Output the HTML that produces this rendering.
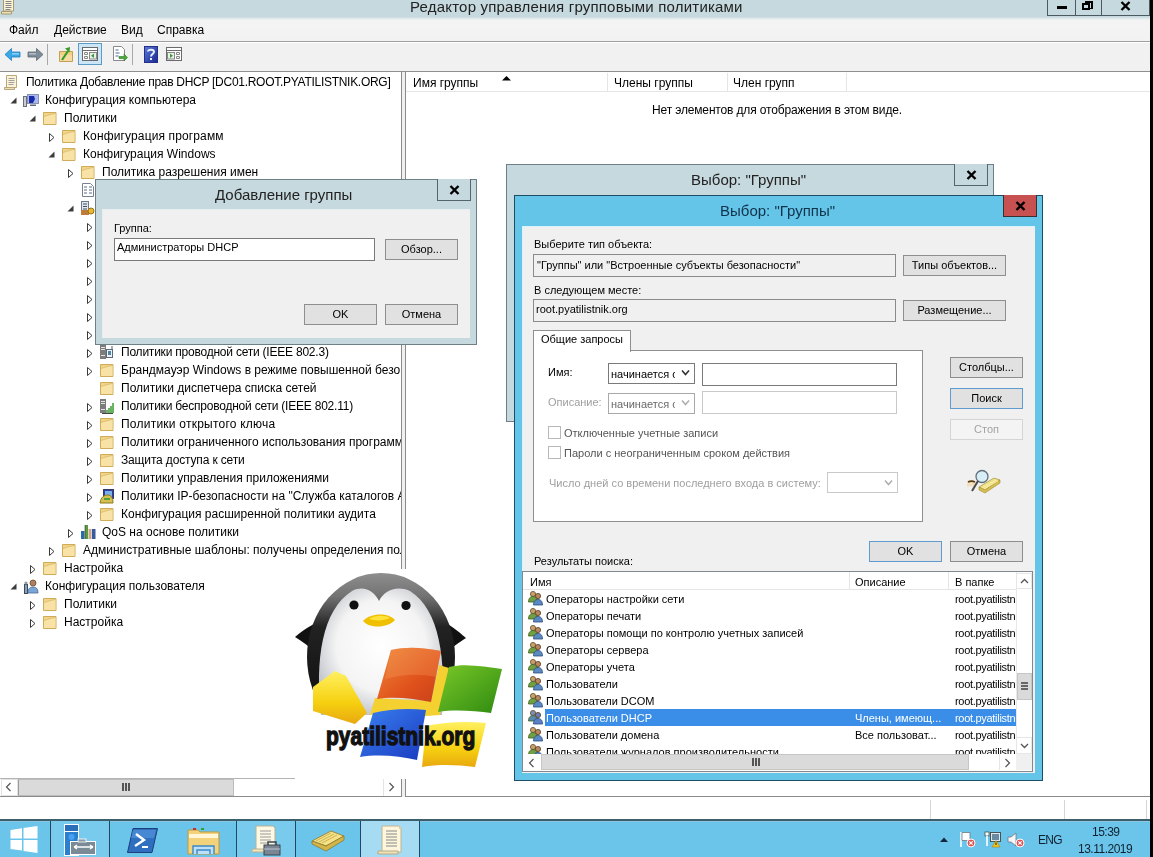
<!DOCTYPE html>
<html><head><meta charset="utf-8">
<style>
*{margin:0;padding:0;box-sizing:border-box}
html,body{width:1153px;height:857px;overflow:hidden;background:#fff;font-family:"Liberation Sans",sans-serif;color:#000}
.t,.row span,.btn{will-change:transform}
.a{position:absolute}
.t{position:absolute;white-space:nowrap;line-height:1}
#title{left:0;top:0;width:1150px;height:18px;background:#c6d9de}
#menu{left:0;top:17px;width:1150px;height:25px;background:linear-gradient(#c9d9de 0px,#e8eef0 2px,#f4f4f4 4px,#f2f2f2 100%);border-bottom:1px solid #a0a0a0}
#tool{left:0;top:42px;width:1150px;height:30px;background:#f1f1f1;border-top:1px solid #fff;border-bottom:1px solid #8f8f8f}
.m{font-size:12px;top:24px}
.row{position:absolute;height:18px;font-size:12px;white-space:nowrap}
.row svg{position:absolute}
.row span{position:absolute;top:3px;line-height:1}
.fold{position:absolute;width:14px;height:12px;background:#f3dc95;border:1px solid #d6b866;border-radius:1px}
.fold:before{content:"";position:absolute;left:7px;top:-3px;width:5px;height:3px;background:#f3dc95;border:1px solid #d6b866;border-bottom:none}
.exp{position:absolute;width:0;height:0;border-top:4px solid transparent;border-bottom:4px solid transparent;border-left:5px solid #555}
.exp:after{content:"";position:absolute;left:-4px;top:-2px;border-top:2px solid transparent;border-bottom:2px solid transparent;border-left:2.5px solid #fff}
.col{position:absolute;width:0;height:0;border-left:5px solid transparent;border-bottom:5px solid #444}
.btn{position:absolute;background:#e1e1e1;border:1px solid #8e8e8e;font-size:11px;text-align:center;line-height:18px}
.tb{position:absolute;background:#fff;border:1px solid #7a7a7a}
.dlg{font-size:11px}
</style></head><body>
<!-- main window -->
<div id="title" class="a"></div>
<div class="t" style="left:410px;top:-1px;font-size:15px;color:#222;letter-spacing:0.2px">Редактор управления групповыми политиками</div>
<div id="menu" class="a"></div>
<div class="t m" style="left:9px">Файл</div>
<div class="t m" style="left:54px">Действие</div>
<div class="t m" style="left:121px">Вид</div>
<div class="t m" style="left:157px">Справка</div>
<div id="tool" class="a"></div>

<!-- panes -->
<div class="a" style="left:0;top:72px;width:402px;height:725px;border-right:1px solid #8a8a8a;border-bottom:1px solid #8a8a8a;background:#fff"></div>
<div class="a" style="left:402px;top:72px;width:3px;height:725px;background:#f0f0f0"></div>
<div class="a" style="left:405px;top:72px;width:745px;height:725px;border-left:1px solid #8a8a8a;border-bottom:1px solid #8a8a8a;background:#fff"></div>

<div class="a" style="left:0;top:72px;width:401px;height:706px;overflow:hidden">
<div class="row" style="top:1px"><svg class="ic" style="left:3px;top:1px" width="16" height="16" viewBox="0 0 16 16"><path d="M3.5 1.5h10v12h-10z" fill="#fbf3d8" stroke="#b8a77a"/><path d="M1.5 13.5h10v2h-10z" fill="#ece0b8" stroke="#b8a77a"/><path d="M5.5 4.5h6M5.5 6.5h6M5.5 8.5h6M5.5 10.5h5" stroke="#8a8a8a" stroke-width="0.8"/></svg><span style="left:25.6px;letter-spacing:-0.28px">Политика Добавление прав DHCP [DC01.ROOT.PYATILISTNIK.ORG]</span></div>
<div class="row" style="top:19px"><svg class="ex" style="left:10px;top:4px" width="7" height="10" viewBox="0 0 7 10"><path d="M6.5 2.5v6h-6z" fill="#3c3c3c"/></svg><svg class="ic" style="left:23px;top:1px" width="18" height="16" viewBox="0 0 18 16"><rect x="0.5" y="4.5" width="3" height="10" fill="#c8ccd4" stroke="#6a6e78"/><rect x="4.5" y="2.5" width="11" height="9" fill="#a8b8f0" stroke="#8890b0"/><path d="M6 4h5l1 3-2 4H6z" fill="#1a2aa8"/><rect x="7" y="12.5" width="6" height="1.5" fill="#606878"/></svg><span style="left:44.6px">Конфигурация компьютера</span></div>
<div class="row" style="top:37px"><svg class="ex" style="left:29px;top:4px" width="7" height="10" viewBox="0 0 7 10"><path d="M6.5 2.5v6h-6z" fill="#3c3c3c"/></svg><svg class="ic" style="left:42px;top:1px" width="16" height="16" viewBox="0 0 16 16"><path d="M1.5 2.5h12.5v12h-12.5z" fill="#f2d488" stroke="#cfac58"/><path d="M2 6.5C5 5.5 9 4 13.5 3.5v10.5H2z" fill="#f8e2a6"/><path d="M2 6.5C5 5.5 9 4 13.5 3.5" fill="none" stroke="#d8b868" stroke-width="0.8"/></svg><span style="left:63.6px">Политики</span></div>
<div class="row" style="top:55px"><svg class="ex" style="left:47.5px;top:5px" width="8" height="11" viewBox="0 0 8 11"><path d="M1.5 1.5L6 5.5 1.5 9.5z" fill="#fff" stroke="#3a3a3a"/></svg><svg class="ic" style="left:61px;top:1px" width="16" height="16" viewBox="0 0 16 16"><path d="M1.5 2.5h12.5v12h-12.5z" fill="#f2d488" stroke="#cfac58"/><path d="M2 6.5C5 5.5 9 4 13.5 3.5v10.5H2z" fill="#f8e2a6"/><path d="M2 6.5C5 5.5 9 4 13.5 3.5" fill="none" stroke="#d8b868" stroke-width="0.8"/></svg><span style="left:82.6px;letter-spacing:0.13px">Конфигурация программ</span></div>
<div class="row" style="top:73px"><svg class="ex" style="left:48px;top:4px" width="7" height="10" viewBox="0 0 7 10"><path d="M6.5 2.5v6h-6z" fill="#3c3c3c"/></svg><svg class="ic" style="left:61px;top:1px" width="16" height="16" viewBox="0 0 16 16"><path d="M1.5 2.5h12.5v12h-12.5z" fill="#f2d488" stroke="#cfac58"/><path d="M2 6.5C5 5.5 9 4 13.5 3.5v10.5H2z" fill="#f8e2a6"/><path d="M2 6.5C5 5.5 9 4 13.5 3.5" fill="none" stroke="#d8b868" stroke-width="0.8"/></svg><span style="left:82.6px">Конфигурация Windows</span></div>
<div class="row" style="top:91px"><svg class="ex" style="left:66.5px;top:5px" width="8" height="11" viewBox="0 0 8 11"><path d="M1.5 1.5L6 5.5 1.5 9.5z" fill="#fff" stroke="#3a3a3a"/></svg><svg class="ic" style="left:80px;top:1px" width="16" height="16" viewBox="0 0 16 16"><path d="M1.5 2.5h12.5v12h-12.5z" fill="#f2d488" stroke="#cfac58"/><path d="M2 6.5C5 5.5 9 4 13.5 3.5v10.5H2z" fill="#f8e2a6"/><path d="M2 6.5C5 5.5 9 4 13.5 3.5" fill="none" stroke="#d8b868" stroke-width="0.8"/></svg><span style="left:101.6px">Политика разрешения имен</span></div>
<div class="row" style="top:109px"><svg class="ic" style="left:80px;top:1px" width="16" height="16" viewBox="0 0 16 16"><path d="M2.5 1.5h8l3 3v10h-11z" fill="#fff" stroke="#7a8090"/><path d="M4 5h3M9 5h3M4 8h3M9 8h3M4 11h3M9 11h3" stroke="#5a6a8a"/></svg><span style="left:101.6px">Сценарии (запуск/завершение)</span></div>
<div class="row" style="top:127px"><svg class="ex" style="left:67px;top:4px" width="7" height="10" viewBox="0 0 7 10"><path d="M6.5 2.5v6h-6z" fill="#3c3c3c"/></svg><svg class="ic" style="left:80px;top:1px" width="16" height="16" viewBox="0 0 16 16"><rect x="1.5" y="1.5" width="7" height="13" fill="#dfe6ee" stroke="#6a7a8a"/><path d="M3 4h4M3 6.5h4M3 9h4" stroke="#44505c"/><rect x="1" y="10" width="8" height="5" fill="#c07a3a"/><circle cx="11" cy="11" r="3" fill="#e8b830" stroke="#9a7010"/></svg><span style="left:101.6px">Параметры безопасности</span></div>
<div class="row" style="top:145px"><svg class="ex" style="left:85.5px;top:5px" width="8" height="11" viewBox="0 0 8 11"><path d="M1.5 1.5L6 5.5 1.5 9.5z" fill="#fff" stroke="#3a3a3a"/></svg><svg class="ic" style="left:99px;top:1px" width="16" height="16" viewBox="0 0 16 16"><path d="M1.5 2.5h12.5v12h-12.5z" fill="#f2d488" stroke="#cfac58"/><path d="M2 6.5C5 5.5 9 4 13.5 3.5v10.5H2z" fill="#f8e2a6"/><path d="M2 6.5C5 5.5 9 4 13.5 3.5" fill="none" stroke="#d8b868" stroke-width="0.8"/></svg><span style="left:120.6px">Политики учетных записей</span></div>
<div class="row" style="top:163px"><svg class="ex" style="left:85.5px;top:5px" width="8" height="11" viewBox="0 0 8 11"><path d="M1.5 1.5L6 5.5 1.5 9.5z" fill="#fff" stroke="#3a3a3a"/></svg><svg class="ic" style="left:99px;top:1px" width="16" height="16" viewBox="0 0 16 16"><path d="M1.5 2.5h12.5v12h-12.5z" fill="#f2d488" stroke="#cfac58"/><path d="M2 6.5C5 5.5 9 4 13.5 3.5v10.5H2z" fill="#f8e2a6"/><path d="M2 6.5C5 5.5 9 4 13.5 3.5" fill="none" stroke="#d8b868" stroke-width="0.8"/></svg><span style="left:120.6px">Локальные политики</span></div>
<div class="row" style="top:181px"><svg class="ex" style="left:85.5px;top:5px" width="8" height="11" viewBox="0 0 8 11"><path d="M1.5 1.5L6 5.5 1.5 9.5z" fill="#fff" stroke="#3a3a3a"/></svg><svg class="ic" style="left:99px;top:1px" width="16" height="16" viewBox="0 0 16 16"><path d="M1.5 2.5h12.5v12h-12.5z" fill="#f2d488" stroke="#cfac58"/><path d="M2 6.5C5 5.5 9 4 13.5 3.5v10.5H2z" fill="#f8e2a6"/><path d="M2 6.5C5 5.5 9 4 13.5 3.5" fill="none" stroke="#d8b868" stroke-width="0.8"/></svg><span style="left:120.6px">Журнал событий</span></div>
<div class="row" style="top:199px"><svg class="ex" style="left:85.5px;top:5px" width="8" height="11" viewBox="0 0 8 11"><path d="M1.5 1.5L6 5.5 1.5 9.5z" fill="#fff" stroke="#3a3a3a"/></svg><svg class="ic" style="left:99px;top:1px" width="16" height="16" viewBox="0 0 16 16"><path d="M1.5 2.5h12.5v12h-12.5z" fill="#f2d488" stroke="#cfac58"/><path d="M2 6.5C5 5.5 9 4 13.5 3.5v10.5H2z" fill="#f8e2a6"/><path d="M2 6.5C5 5.5 9 4 13.5 3.5" fill="none" stroke="#d8b868" stroke-width="0.8"/></svg><span style="left:120.6px">Группы с ограниченным доступом</span></div>
<div class="row" style="top:217px"><svg class="ex" style="left:85.5px;top:5px" width="8" height="11" viewBox="0 0 8 11"><path d="M1.5 1.5L6 5.5 1.5 9.5z" fill="#fff" stroke="#3a3a3a"/></svg><svg class="ic" style="left:99px;top:1px" width="16" height="16" viewBox="0 0 16 16"><path d="M1.5 2.5h12.5v12h-12.5z" fill="#f2d488" stroke="#cfac58"/><path d="M2 6.5C5 5.5 9 4 13.5 3.5v10.5H2z" fill="#f8e2a6"/><path d="M2 6.5C5 5.5 9 4 13.5 3.5" fill="none" stroke="#d8b868" stroke-width="0.8"/></svg><span style="left:120.6px">Системные службы</span></div>
<div class="row" style="top:235px"><svg class="ex" style="left:85.5px;top:5px" width="8" height="11" viewBox="0 0 8 11"><path d="M1.5 1.5L6 5.5 1.5 9.5z" fill="#fff" stroke="#3a3a3a"/></svg><svg class="ic" style="left:99px;top:1px" width="16" height="16" viewBox="0 0 16 16"><path d="M1.5 2.5h12.5v12h-12.5z" fill="#f2d488" stroke="#cfac58"/><path d="M2 6.5C5 5.5 9 4 13.5 3.5v10.5H2z" fill="#f8e2a6"/><path d="M2 6.5C5 5.5 9 4 13.5 3.5" fill="none" stroke="#d8b868" stroke-width="0.8"/></svg><span style="left:120.6px">Реестр</span></div>
<div class="row" style="top:253px"><svg class="ex" style="left:85.5px;top:5px" width="8" height="11" viewBox="0 0 8 11"><path d="M1.5 1.5L6 5.5 1.5 9.5z" fill="#fff" stroke="#3a3a3a"/></svg><svg class="ic" style="left:99px;top:1px" width="16" height="16" viewBox="0 0 16 16"><path d="M1.5 2.5h12.5v12h-12.5z" fill="#f2d488" stroke="#cfac58"/><path d="M2 6.5C5 5.5 9 4 13.5 3.5v10.5H2z" fill="#f8e2a6"/><path d="M2 6.5C5 5.5 9 4 13.5 3.5" fill="none" stroke="#d8b868" stroke-width="0.8"/></svg><span style="left:120.6px">Файловая система</span></div>
<div class="row" style="top:271px"><svg class="ex" style="left:85.5px;top:5px" width="8" height="11" viewBox="0 0 8 11"><path d="M1.5 1.5L6 5.5 1.5 9.5z" fill="#fff" stroke="#3a3a3a"/></svg><svg class="ic" style="left:99px;top:1px" width="16" height="16" viewBox="0 0 16 16"><rect x="1" y="1" width="6" height="14" fill="#7c7c7c"/><path d="M2 3.5h4M2 5.5h4M2 11.5h4" stroke="#eee" stroke-width="0.9"/><rect x="7.5" y="5.5" width="6" height="8" fill="#eef2f6" stroke="#5a6a7a"/><rect x="9" y="7" width="3" height="4" fill="#4a88a8"/><path d="M13 5V2" stroke="#888" stroke-width="1.4"/></svg><span style="left:120.6px;letter-spacing:-0.22px">Политики проводной сети (IEEE 802.3)</span></div>
<div class="row" style="top:289px"><svg class="ex" style="left:85.5px;top:5px" width="8" height="11" viewBox="0 0 8 11"><path d="M1.5 1.5L6 5.5 1.5 9.5z" fill="#fff" stroke="#3a3a3a"/></svg><svg class="ic" style="left:99px;top:1px" width="16" height="16" viewBox="0 0 16 16"><path d="M1.5 2.5h12.5v12h-12.5z" fill="#f2d488" stroke="#cfac58"/><path d="M2 6.5C5 5.5 9 4 13.5 3.5v10.5H2z" fill="#f8e2a6"/><path d="M2 6.5C5 5.5 9 4 13.5 3.5" fill="none" stroke="#d8b868" stroke-width="0.8"/></svg><span style="left:120.6px">Брандмауэр Windows в режиме повышенной безопасности</span></div>
<div class="row" style="top:307px"><svg class="ic" style="left:99px;top:1px" width="16" height="16" viewBox="0 0 16 16"><path d="M1.5 2.5h12.5v12h-12.5z" fill="#f2d488" stroke="#cfac58"/><path d="M2 6.5C5 5.5 9 4 13.5 3.5v10.5H2z" fill="#f8e2a6"/><path d="M2 6.5C5 5.5 9 4 13.5 3.5" fill="none" stroke="#d8b868" stroke-width="0.8"/></svg><span style="left:120.6px">Политики диспетчера списка сетей</span></div>
<div class="row" style="top:325px"><svg class="ex" style="left:85.5px;top:5px" width="8" height="11" viewBox="0 0 8 11"><path d="M1.5 1.5L6 5.5 1.5 9.5z" fill="#fff" stroke="#3a3a3a"/></svg><svg class="ic" style="left:99px;top:1px" width="16" height="16" viewBox="0 0 16 16"><rect x="1" y="1" width="6" height="14" fill="#7c7c7c"/><path d="M2 3.5h4M2 5.5h4M2 11.5h4" stroke="#eee" stroke-width="0.9"/><path d="M8 15v-3M10 15v-5M12 15v-7M14 15v-10" stroke="#3a9a30" stroke-width="1.5"/><path d="M3 15.5h11" stroke="#444"/></svg><span style="left:120.6px;letter-spacing:-0.22px">Политики беспроводной сети (IEEE 802.11)</span></div>
<div class="row" style="top:343px"><svg class="ex" style="left:85.5px;top:5px" width="8" height="11" viewBox="0 0 8 11"><path d="M1.5 1.5L6 5.5 1.5 9.5z" fill="#fff" stroke="#3a3a3a"/></svg><svg class="ic" style="left:99px;top:1px" width="16" height="16" viewBox="0 0 16 16"><path d="M1.5 2.5h12.5v12h-12.5z" fill="#f2d488" stroke="#cfac58"/><path d="M2 6.5C5 5.5 9 4 13.5 3.5v10.5H2z" fill="#f8e2a6"/><path d="M2 6.5C5 5.5 9 4 13.5 3.5" fill="none" stroke="#d8b868" stroke-width="0.8"/></svg><span style="left:120.6px;letter-spacing:0.23px">Политики открытого ключа</span></div>
<div class="row" style="top:361px"><svg class="ex" style="left:85.5px;top:5px" width="8" height="11" viewBox="0 0 8 11"><path d="M1.5 1.5L6 5.5 1.5 9.5z" fill="#fff" stroke="#3a3a3a"/></svg><svg class="ic" style="left:99px;top:1px" width="16" height="16" viewBox="0 0 16 16"><path d="M1.5 2.5h12.5v12h-12.5z" fill="#f2d488" stroke="#cfac58"/><path d="M2 6.5C5 5.5 9 4 13.5 3.5v10.5H2z" fill="#f8e2a6"/><path d="M2 6.5C5 5.5 9 4 13.5 3.5" fill="none" stroke="#d8b868" stroke-width="0.8"/></svg><span style="left:120.6px">Политики ограниченного использования программ</span></div>
<div class="row" style="top:379px"><svg class="ex" style="left:85.5px;top:5px" width="8" height="11" viewBox="0 0 8 11"><path d="M1.5 1.5L6 5.5 1.5 9.5z" fill="#fff" stroke="#3a3a3a"/></svg><svg class="ic" style="left:99px;top:1px" width="16" height="16" viewBox="0 0 16 16"><path d="M1.5 2.5h12.5v12h-12.5z" fill="#f2d488" stroke="#cfac58"/><path d="M2 6.5C5 5.5 9 4 13.5 3.5v10.5H2z" fill="#f8e2a6"/><path d="M2 6.5C5 5.5 9 4 13.5 3.5" fill="none" stroke="#d8b868" stroke-width="0.8"/></svg><span style="left:120.6px;letter-spacing:-0.15px">Защита доступа к сети</span></div>
<div class="row" style="top:397px"><svg class="ex" style="left:85.5px;top:5px" width="8" height="11" viewBox="0 0 8 11"><path d="M1.5 1.5L6 5.5 1.5 9.5z" fill="#fff" stroke="#3a3a3a"/></svg><svg class="ic" style="left:99px;top:1px" width="16" height="16" viewBox="0 0 16 16"><path d="M1.5 2.5h12.5v12h-12.5z" fill="#f2d488" stroke="#cfac58"/><path d="M2 6.5C5 5.5 9 4 13.5 3.5v10.5H2z" fill="#f8e2a6"/><path d="M2 6.5C5 5.5 9 4 13.5 3.5" fill="none" stroke="#d8b868" stroke-width="0.8"/></svg><span style="left:120.6px">Политики управления приложениями</span></div>
<div class="row" style="top:415px"><svg class="ex" style="left:85.5px;top:5px" width="8" height="11" viewBox="0 0 8 11"><path d="M1.5 1.5L6 5.5 1.5 9.5z" fill="#fff" stroke="#3a3a3a"/></svg><svg class="ic" style="left:99px;top:1px" width="16" height="16" viewBox="0 0 16 16"><rect x="4.5" y="1.5" width="10" height="9" fill="#2840a8" stroke="#3a3a60"/><rect x="6" y="3" width="7" height="6" fill="#7ab0e8"/><path d="M1 15c1-6 4-8 8-8 3 0 5 3 5 8z" fill="#d8c050" stroke="#8a7a20"/><path d="M5 11h6" stroke="#50a040" stroke-width="2"/></svg><span style="left:120.6px">Политики IP-безопасности на &quot;Служба каталогов Active Directory&quot;</span></div>
<div class="row" style="top:433px"><svg class="ex" style="left:85.5px;top:5px" width="8" height="11" viewBox="0 0 8 11"><path d="M1.5 1.5L6 5.5 1.5 9.5z" fill="#fff" stroke="#3a3a3a"/></svg><svg class="ic" style="left:99px;top:1px" width="16" height="16" viewBox="0 0 16 16"><path d="M1.5 2.5h12.5v12h-12.5z" fill="#f2d488" stroke="#cfac58"/><path d="M2 6.5C5 5.5 9 4 13.5 3.5v10.5H2z" fill="#f8e2a6"/><path d="M2 6.5C5 5.5 9 4 13.5 3.5" fill="none" stroke="#d8b868" stroke-width="0.8"/></svg><span style="left:120.6px">Конфигурация расширенной политики аудита</span></div>
<div class="row" style="top:451px"><svg class="ex" style="left:66.5px;top:5px" width="8" height="11" viewBox="0 0 8 11"><path d="M1.5 1.5L6 5.5 1.5 9.5z" fill="#fff" stroke="#3a3a3a"/></svg><svg class="ic" style="left:80px;top:1px" width="18" height="16" viewBox="0 0 18 16"><rect x="1" y="7" width="3.5" height="8" fill="#2a6aa8"/><rect x="5" y="1" width="3" height="14" fill="#5a9a40"/><rect x="8.5" y="5" width="3" height="10" fill="#c8a888"/><rect x="12" y="5" width="3.5" height="10" fill="#3a5aa0"/><path d="M5 1v14" stroke="#333" stroke-width="0.6"/></svg><span style="left:101.6px">QoS на основе политики</span></div>
<div class="row" style="top:469px"><svg class="ex" style="left:47.5px;top:5px" width="8" height="11" viewBox="0 0 8 11"><path d="M1.5 1.5L6 5.5 1.5 9.5z" fill="#fff" stroke="#3a3a3a"/></svg><svg class="ic" style="left:61px;top:1px" width="16" height="16" viewBox="0 0 16 16"><path d="M1.5 2.5h12.5v12h-12.5z" fill="#f2d488" stroke="#cfac58"/><path d="M2 6.5C5 5.5 9 4 13.5 3.5v10.5H2z" fill="#f8e2a6"/><path d="M2 6.5C5 5.5 9 4 13.5 3.5" fill="none" stroke="#d8b868" stroke-width="0.8"/></svg><span style="left:82.6px">Административные шаблоны: получены определения политик</span></div>
<div class="row" style="top:487px"><svg class="ex" style="left:28.5px;top:5px" width="8" height="11" viewBox="0 0 8 11"><path d="M1.5 1.5L6 5.5 1.5 9.5z" fill="#fff" stroke="#3a3a3a"/></svg><svg class="ic" style="left:42px;top:1px" width="16" height="16" viewBox="0 0 16 16"><path d="M1.5 2.5h12.5v12h-12.5z" fill="#f2d488" stroke="#cfac58"/><path d="M2 6.5C5 5.5 9 4 13.5 3.5v10.5H2z" fill="#f8e2a6"/><path d="M2 6.5C5 5.5 9 4 13.5 3.5" fill="none" stroke="#d8b868" stroke-width="0.8"/></svg><span style="left:63.6px">Настройка</span></div>
<div class="row" style="top:505px"><svg class="ex" style="left:10px;top:4px" width="7" height="10" viewBox="0 0 7 10"><path d="M6.5 2.5v6h-6z" fill="#3c3c3c"/></svg><svg class="ic" style="left:23px;top:1px" width="18" height="16" viewBox="0 0 18 16"><rect x="1.5" y="6.5" width="3" height="9" fill="#8aa0b8" stroke="#3a4a5a"/><circle cx="3" cy="5" r="1.6" fill="#999"/><circle cx="10" cy="5" r="3" fill="#b08060" stroke="#6a4a30" stroke-width="0.8"/><path d="M5 15c0-5 2.5-6 5-6s5 1 5 6z" fill="#7aa6d6" stroke="#4a6a98" stroke-width="0.8"/></svg><span style="left:44.6px">Конфигурация пользователя</span></div>
<div class="row" style="top:523px"><svg class="ex" style="left:28.5px;top:5px" width="8" height="11" viewBox="0 0 8 11"><path d="M1.5 1.5L6 5.5 1.5 9.5z" fill="#fff" stroke="#3a3a3a"/></svg><svg class="ic" style="left:42px;top:1px" width="16" height="16" viewBox="0 0 16 16"><path d="M1.5 2.5h12.5v12h-12.5z" fill="#f2d488" stroke="#cfac58"/><path d="M2 6.5C5 5.5 9 4 13.5 3.5v10.5H2z" fill="#f8e2a6"/><path d="M2 6.5C5 5.5 9 4 13.5 3.5" fill="none" stroke="#d8b868" stroke-width="0.8"/></svg><span style="left:63.6px">Политики</span></div>
<div class="row" style="top:541px"><svg class="ex" style="left:28.5px;top:5px" width="8" height="11" viewBox="0 0 8 11"><path d="M1.5 1.5L6 5.5 1.5 9.5z" fill="#fff" stroke="#3a3a3a"/></svg><svg class="ic" style="left:42px;top:1px" width="16" height="16" viewBox="0 0 16 16"><path d="M1.5 2.5h12.5v12h-12.5z" fill="#f2d488" stroke="#cfac58"/><path d="M2 6.5C5 5.5 9 4 13.5 3.5v10.5H2z" fill="#f8e2a6"/><path d="M2 6.5C5 5.5 9 4 13.5 3.5" fill="none" stroke="#d8b868" stroke-width="0.8"/></svg><span style="left:63.6px">Настройка</span></div>
</div>
<!-- status bar -->
<div class="a" style="left:0;top:797px;width:1150px;height:23px;background:#fff"></div>
<!-- title app icon (cropped) -->
<svg class="a" style="left:0;top:0" width="16" height="16" viewBox="0 0 16 16"><path d="M3.5 -2h10v13h-10z" fill="#fbf3d8" stroke="#a89a70"/><path d="M1.5 11.5h10v2.5h-10z" fill="#ece0b8" stroke="#a89a70"/><path d="M5.5 1.5h6M5.5 3.5h6M5.5 5.5h6M5.5 7.5h6M5.5 9.5h5" stroke="#7a7a7a" stroke-width="0.9"/></svg>
<!-- window buttons -->
<div class="a" style="left:1047px;top:-1px;width:103px;height:17px;border:1px solid #4a5a60;border-top:none;background:#c6d9de"></div>
<div class="a" style="left:1075px;top:0;width:1px;height:16px;background:#4a5a60"></div>
<div class="a" style="left:1101px;top:0;width:1px;height:16px;background:#4a5a60"></div>
<div class="a" style="left:1057px;top:6px;width:10px;height:3px;background:#000"></div>
<div class="a" style="left:1085px;top:1px;width:8px;height:8px;border:2px solid #000;border-left-width:1px;border-bottom-width:1px"></div>
<div class="a" style="left:1082px;top:3px;width:8px;height:7px;border:2px solid #000;background:#c6d9de"></div>
<svg class="a" style="left:1120px;top:1px" width="11" height="10" viewBox="0 0 11 10"><path d="M1.5 1l8 8M9.5 1l-8 8" stroke="#000" stroke-width="2.4"/></svg>

<!-- toolbar -->
<svg class="a" style="left:4px;top:47px" width="17" height="15" viewBox="0 0 17 15"><path d="M1 7.5L7.5 1.5V5H16V10H7.5V13.5Z" fill="#3aa7e6" stroke="#1f7dc0" stroke-width="0.8"/><path d="M8 6h7v1.5H8z" fill="#8dd0f5"/></svg>
<svg class="a" style="left:27px;top:47px" width="17" height="15" viewBox="0 0 17 15"><path d="M16 7.5L9.5 1.5V5H1V10H9.5V13.5Z" fill="#7f8c99" stroke="#5c6772" stroke-width="0.8"/><path d="M2 6h7v1.5H2z" fill="#b4bec8"/></svg>
<div class="a" style="left:47px;top:44px;width:1px;height:21px;background:#a8a8a8"></div>
<svg class="a" style="left:58px;top:46px" width="16" height="17" viewBox="0 0 16 17"><path d="M1.5 5.5h13v10h-13z" fill="#f1d088" stroke="#c4a055"/><path d="M2 9h12v6H2z" fill="#f6dca0"/><path d="M4 14L10 5" stroke="#3a9a2a" stroke-width="2.2" fill="none"/><path d="M7 2.5l5-1.5-0.5 5.5z" fill="#3a9a2a"/></svg>
<div class="a" style="left:78px;top:43px;width:24px;height:22px;background:#cde6f7;border:1px solid #5c9ac8"></div>
<svg class="a" style="left:82px;top:47px" width="16" height="14" viewBox="0 0 16 14"><rect x="0.5" y="0.5" width="15" height="13" fill="#fff" stroke="#6a6a6a"/><path d="M0.5 3.5h15" stroke="#6a6a6a"/><path d="M2.5 5.5h3v2h-3zM2.5 9.5h3v2h-3z" fill="none" stroke="#888"/><rect x="7.5" y="5.5" width="7" height="6.5" fill="#e8f0e8" stroke="#888"/><path d="M12 6.5v4.5l-3-2.25z" fill="#3a9a3a"/></svg>
<svg class="a" style="left:112px;top:46px" width="16" height="16" viewBox="0 0 16 16"><path d="M1.5 0.5h8l3 3v11h-11z" fill="#fff" stroke="#8a8a8a"/><path d="M3.5 4h3M3.5 7h4M3.5 10h3" stroke="#4a6a9a"/><path d="M7 10.5h5V8l3.5 3.5L12 15v-2.5H7z" fill="#4aaa3a" stroke="#2e7a22" stroke-width="0.6"/></svg>
<div class="a" style="left:132px;top:44px;width:1px;height:21px;background:#a8a8a8"></div>
<svg class="a" style="left:144px;top:46px" width="14" height="17" viewBox="0 0 14 17"><defs><linearGradient id="hg" x1="0" y1="0" x2="1" y2="1"><stop offset="0" stop-color="#5a78d8"/><stop offset="1" stop-color="#1a2a90"/></linearGradient></defs><rect x="0" y="0" width="14" height="17" fill="#22308a"/><rect x="1" y="1" width="12" height="15" fill="url(#hg)"/><path d="M4 5.5C4 3 10 3 10 5.8 10 8 7 8 7 10.5" fill="none" stroke="#e8eeff" stroke-width="2"/><rect x="6" y="12" width="2" height="2" fill="#e8eeff"/></svg>
<svg class="a" style="left:166px;top:47px" width="16" height="14" viewBox="0 0 16 14"><rect x="0.5" y="0.5" width="15" height="13" fill="#fff" stroke="#6a6a6a"/><path d="M0.5 3.5h15" stroke="#6a6a6a"/><path d="M10.5 5.5h3v2h-3zM10.5 9.5h3v2h-3z" fill="none" stroke="#888"/><rect x="1.5" y="5.5" width="7" height="6.5" fill="#e8f0e8" stroke="#888"/><path d="M4 6.5v4.5l3-2.25z" fill="#3a9a3a"/></svg>

<!-- right pane header -->
<div class="a" style="left:406px;top:72px;width:744px;height:20px;background:#fff;border-bottom:1px solid #e5e5e5"></div>
<div class="a" style="left:607px;top:73px;width:1px;height:18px;background:#e5e5e5"></div>
<div class="a" style="left:727px;top:73px;width:1px;height:18px;background:#e5e5e5"></div>
<div class="a" style="left:846px;top:73px;width:1px;height:18px;background:#e5e5e5"></div>
<div class="t" style="left:413px;top:77px;font-size:12px">Имя группы</div>
<div class="t" style="left:614px;top:77px;font-size:12px">Члены группы</div>
<div class="t" style="left:733px;top:77px;font-size:12px">Член групп</div>
<svg class="a" style="left:502px;top:76px" width="9" height="5" viewBox="0 0 9 5"><path d="M0 4.5L4.5 0 9 4.5z" fill="#000"/></svg>
<div class="t" style="left:652px;top:104px;font-size:12px;letter-spacing:-0.15px">Нет элементов для отображения в этом виде.</div>

<!-- tree hscroll -->
<div class="a" style="left:0px;top:778px;width:401px;height:18px;background:#fff;border-top:1px solid #b4b4b4"></div>
<div class="a" style="left:1px;top:779px;width:17px;height:17px;border:1px solid #e2e2e2"></div>
<div class="a" style="left:18px;top:779px;width:216px;height:17px;background:#dadada;border:1px solid #bcbcbc;border-left-color:#9a9a9a"></div>
<svg class="a" style="left:5px;top:782px" width="7" height="10" viewBox="0 0 7 10"><path d="M5.5 1L1.5 5l4 4" fill="none" stroke="#555" stroke-width="1.2"/></svg>
<div class="a" style="left:383px;top:779px;width:17px;height:17px;border-left:1px solid #e4e4e4"></div>
<svg class="a" style="left:388px;top:782px" width="7" height="10" viewBox="0 0 7 10"><path d="M1.5 1l4 4-4 4" fill="none" stroke="#555" stroke-width="1.2"/></svg>
<div class="a" style="left:122px;top:783px;width:2px;height:8px;background:#555"></div>
<div class="a" style="left:125px;top:783px;width:2px;height:8px;background:#555"></div>
<div class="a" style="left:128px;top:783px;width:2px;height:8px;background:#555"></div>

<!-- status bar dividers -->
<div class="a" style="left:930px;top:800px;width:1px;height:20px;background:#d6d6d6"></div>
<div class="a" style="left:1064px;top:800px;width:1px;height:20px;background:#d6d6d6"></div>
<div class="a" style="left:1146px;top:800px;width:1px;height:20px;background:#d6d6d6"></div>

<!-- Добавление группы -->
<div class="a" style="left:95px;top:179px;width:382px;height:166px;background:#c6d9de;border:1px solid #6e7f86"></div>
<div class="a" style="left:102px;top:209px;width:368px;height:129px;background:#f0f0f0;border-top:1px solid #e6eef0;border-left:1px solid #e6eef0"></div>
<div class="t" style="left:215px;top:187px;font-size:15px;color:#222">Добавление группы</div>
<div class="a" style="left:437px;top:179px;width:34px;height:22px;border:1px solid #56656c;border-top:none;background:#c6d9de"></div>
<svg class="a" style="left:449px;top:185px" width="11" height="10" viewBox="0 0 11 10"><path d="M1.5 1l8 8M9.5 1l-8 8" stroke="#000" stroke-width="2.4"/></svg>
<div class="t dlg" style="left:114px;top:223px">Группа:</div>
<div class="tb" style="left:114px;top:238px;width:261px;height:23px"></div>
<div class="t dlg" style="left:117px;top:242px">Администраторы DHCP</div>
<div class="btn" style="left:385px;top:239px;width:73px;height:21px">Обзор...</div>
<div class="btn" style="left:304px;top:304px;width:73px;height:21px">OK</div>
<div class="btn" style="left:385px;top:304px;width:73px;height:21px">Отмена</div>

<!-- back Выбор -->
<div class="a" style="left:506px;top:164px;width:488px;height:258px;background:#c6d9de;border:1px solid #6e7f86"></div>
<div class="t" style="left:691px;top:172px;font-size:15px;color:#222">Выбор: "Группы"</div>
<div class="a" style="left:954px;top:164px;width:34px;height:22px;border:1px solid #56656c;border-top:none;background:#c6d9de"></div>
<svg class="a" style="left:966px;top:170px" width="11" height="10" viewBox="0 0 11 10"><path d="M1.5 1l8 8M9.5 1l-8 8" stroke="#000" stroke-width="2.4"/></svg>

<!-- front Выбор -->
<div class="a" style="left:514px;top:195px;width:529px;height:586px;background:#64c5e9;border:1px solid #1d4e66"></div>
<div class="a" style="left:522px;top:226px;width:513px;height:547px;background:#f0f0f0;border-top:1px solid #d8f3fb;border-left:1px solid #d8f3fb"></div>
<div class="t" style="left:720px;top:203px;font-size:15px;color:#10324a">Выбор: "Группы"</div>
<div class="a" style="left:1003px;top:195px;width:34px;height:22px;border:1px solid #3a3030;border-top:none;background:#c75050"></div>
<svg class="a" style="left:1015px;top:201px" width="11" height="10" viewBox="0 0 11 10"><path d="M1.5 1l8 8M9.5 1l-8 8" stroke="#000" stroke-width="2.4"/></svg>

<div class="t dlg" style="left:534px;top:239px">Выберите тип объекта:</div>
<div class="a" style="left:533px;top:254px;width:363px;height:23px;background:#f0f0f0;border:1px solid #8a8a8a"></div>
<div class="t dlg" style="left:537px;top:260px">"Группы" или "Встроенные субъекты безопасности"</div>
<div class="btn" style="left:903px;top:255px;width:103px;height:21px">Типы объектов...</div>
<div class="t dlg" style="left:534px;top:285px">В следующем месте:</div>
<div class="a" style="left:533px;top:299px;width:363px;height:23px;background:#f0f0f0;border:1px solid #8a8a8a"></div>
<div class="t dlg" style="left:536px;top:304px">root.pyatilistnik.org</div>
<div class="btn" style="left:903px;top:300px;width:103px;height:21px">Размещение...</div>

<!-- tab panel -->
<div class="a" style="left:533px;top:350px;width:390px;height:172px;background:#fff;border:1px solid #8f8f8f"></div>
<div class="a" style="left:533px;top:330px;width:98px;height:22px;background:#fff;border:1px solid #8f8f8f;border-bottom:none"></div>
<div class="t dlg" style="left:541px;top:334px">Общие запросы</div>
<div class="t dlg" style="left:548px;top:367px">Имя:</div>
<div class="a" style="left:608px;top:363px;width:87px;height:21px;background:#fff;border:1px solid #7a7a7a;overflow:hidden"></div>
<div class="t dlg" style="left:611px;top:369px;width:64px;overflow:hidden">начинается с</div>
<svg class="a" style="left:681px;top:369px" width="9" height="7" viewBox="0 0 9 7"><path d="M1 1.5l3.5 4 3.5-4" fill="none" stroke="#333" stroke-width="1.6"/></svg>
<div class="tb" style="left:702px;top:363px;width:195px;height:23px"></div>
<div class="t dlg" style="left:548px;top:397px;color:#a0a0a0">Описание:</div>
<div class="a" style="left:608px;top:393px;width:87px;height:21px;background:#fff;border:1px solid #a9a9a9"></div>
<div class="t dlg" style="left:611px;top:399px;width:64px;overflow:hidden;color:#6a6a6a">начинается с</div>
<svg class="a" style="left:681px;top:399px" width="9" height="7" viewBox="0 0 9 7"><path d="M1 1.5l3.5 4 3.5-4" fill="none" stroke="#b0b0b0" stroke-width="1.6"/></svg>
<div class="a" style="left:702px;top:391px;width:195px;height:23px;background:#fff;border:1px solid #c9c9c9"></div>
<div class="a" style="left:548px;top:426px;width:13px;height:13px;background:#fff;border:1px solid #b8b8b8"></div>
<div class="t dlg" style="left:564px;top:428px;color:#555">Отключенные учетные записи</div>
<div class="a" style="left:548px;top:446px;width:13px;height:13px;background:#fff;border:1px solid #b8b8b8"></div>
<div class="t dlg" style="left:564px;top:448px;color:#555">Пароли с неограниченным сроком действия</div>
<div class="t dlg" style="left:549px;top:478px;color:#a0a0a0">Число дней со времени последнего входа в систему:</div>
<div class="a" style="left:827px;top:472px;width:71px;height:21px;background:#fff;border:1px solid #c9c9c9"></div>
<svg class="a" style="left:884px;top:479px" width="9" height="7" viewBox="0 0 9 7"><path d="M1 1.5l3.5 4 3.5-4" fill="none" stroke="#b0b0b0" stroke-width="1.6"/></svg>

<div class="btn" style="left:950px;top:357px;width:73px;height:21px">Столбцы...</div>
<div class="btn" style="left:950px;top:388px;width:73px;height:21px;border-color:#5f9ad0">Поиск</div>
<div class="btn" style="left:950px;top:419px;width:73px;height:21px;background:#f4f4f4;border-color:#d5d5d5;color:#a3a3a3">Стоп</div>
<!-- search icon -->
<svg class="a" style="left:967px;top:468px" width="36" height="28" viewBox="0 0 36 28"><path d="M12 19L27 10l6 2-15 10z" fill="#efe08a" stroke="#b0a040" stroke-width="0.8"/><path d="M12 19v3l6 3 15-10v-3L18 22z" fill="#d8c050" stroke="#a08a30" stroke-width="0.6"/><path d="M15 20l14-8M17 21l14-8" stroke="#fff4b0" stroke-width="0.8"/><path d="M0 14c2-2 6-2 9 0v5c-3-1-6-1-9 0z" fill="#f2dfc0"/><path d="M1 14c2-1 5-1 7 0" stroke="#5a3a10" stroke-width="1.6"/><circle cx="15" cy="8.5" r="6" fill="#d8eef6" stroke="#60707a" stroke-width="1.3"/><path d="M11 13L5 23" stroke="#4a4a4a" stroke-width="2"/></svg>

<div class="btn" style="left:869px;top:541px;width:73px;height:21px;border-color:#5f9ad0">OK</div>
<div class="btn" style="left:950px;top:541px;width:73px;height:21px">Отмена</div>
<div class="t dlg" style="left:534px;top:556px">Результаты поиска:</div>

<!-- results list -->
<div class="a" style="left:522px;top:571px;width:511px;height:201px;background:#fff;border:1px solid #828790"></div>
<div class="a" style="left:523px;top:572px;width:493px;height:182px;overflow:hidden">
<div class="a" style="left:0;top:0;width:493px;height:18px;background:#fff;border-bottom:1px solid #e5e5e5"></div>
<div class="a" style="left:326px;top:0;width:1px;height:18px;background:#e5e5e5"></div>
<div class="a" style="left:425px;top:0;width:1px;height:18px;background:#e5e5e5"></div>
<div class="t dlg" style="left:7px;top:5px">Имя</div>
<div class="t dlg" style="left:332px;top:5px">Описание</div>
<div class="t dlg" style="left:432px;top:5px">В папке</div>
<div class="a" style="left:5px;top:18px;width:17px;height:16px"><svg class="a" style="left:0;top:0" width="17" height="16" viewBox="0 0 17 16"><circle cx="5" cy="4" r="2.6" fill="#c8a070" stroke="#6a4a20" stroke-width="0.8"/><path d="M0.5 12c0-4 2-5.5 4.5-5.5S9.5 8 9.5 12z" fill="#70a040" stroke="#3a6020" stroke-width="0.8"/><circle cx="10" cy="6" r="2.6" fill="#b88860" stroke="#5a3a20" stroke-width="0.8"/><path d="M5.5 15c0-4 2-5.5 4.5-5.5s4.5 1.5 4.5 5.5z" fill="#5a8ac0" stroke="#2a4a80" stroke-width="0.8"/></svg></div>
<div class="t dlg" style="left:23px;top:22px;color:#000">Операторы настройки сети</div>
<div class="t dlg" style="left:432px;top:22px;width:61px;overflow:hidden;letter-spacing:-0.3px;color:#000">root.pyatilistnik.org</div>
<div class="a" style="left:5px;top:35px;width:17px;height:16px"><svg class="a" style="left:0;top:0" width="17" height="16" viewBox="0 0 17 16"><circle cx="5" cy="4" r="2.6" fill="#c8a070" stroke="#6a4a20" stroke-width="0.8"/><path d="M0.5 12c0-4 2-5.5 4.5-5.5S9.5 8 9.5 12z" fill="#70a040" stroke="#3a6020" stroke-width="0.8"/><circle cx="10" cy="6" r="2.6" fill="#b88860" stroke="#5a3a20" stroke-width="0.8"/><path d="M5.5 15c0-4 2-5.5 4.5-5.5s4.5 1.5 4.5 5.5z" fill="#5a8ac0" stroke="#2a4a80" stroke-width="0.8"/></svg></div>
<div class="t dlg" style="left:23px;top:39px;color:#000">Операторы печати</div>
<div class="t dlg" style="left:432px;top:39px;width:61px;overflow:hidden;letter-spacing:-0.3px;color:#000">root.pyatilistnik.org</div>
<div class="a" style="left:5px;top:52px;width:17px;height:16px"><svg class="a" style="left:0;top:0" width="17" height="16" viewBox="0 0 17 16"><circle cx="5" cy="4" r="2.6" fill="#c8a070" stroke="#6a4a20" stroke-width="0.8"/><path d="M0.5 12c0-4 2-5.5 4.5-5.5S9.5 8 9.5 12z" fill="#70a040" stroke="#3a6020" stroke-width="0.8"/><circle cx="10" cy="6" r="2.6" fill="#b88860" stroke="#5a3a20" stroke-width="0.8"/><path d="M5.5 15c0-4 2-5.5 4.5-5.5s4.5 1.5 4.5 5.5z" fill="#5a8ac0" stroke="#2a4a80" stroke-width="0.8"/></svg></div>
<div class="t dlg" style="left:23px;top:56px;color:#000">Операторы помощи по контролю учетных записей</div>
<div class="t dlg" style="left:432px;top:56px;width:61px;overflow:hidden;letter-spacing:-0.3px;color:#000">root.pyatilistnik.org</div>
<div class="a" style="left:5px;top:69px;width:17px;height:16px"><svg class="a" style="left:0;top:0" width="17" height="16" viewBox="0 0 17 16"><circle cx="5" cy="4" r="2.6" fill="#c8a070" stroke="#6a4a20" stroke-width="0.8"/><path d="M0.5 12c0-4 2-5.5 4.5-5.5S9.5 8 9.5 12z" fill="#70a040" stroke="#3a6020" stroke-width="0.8"/><circle cx="10" cy="6" r="2.6" fill="#b88860" stroke="#5a3a20" stroke-width="0.8"/><path d="M5.5 15c0-4 2-5.5 4.5-5.5s4.5 1.5 4.5 5.5z" fill="#5a8ac0" stroke="#2a4a80" stroke-width="0.8"/></svg></div>
<div class="t dlg" style="left:23px;top:73px;color:#000">Операторы сервера</div>
<div class="t dlg" style="left:432px;top:73px;width:61px;overflow:hidden;letter-spacing:-0.3px;color:#000">root.pyatilistnik.org</div>
<div class="a" style="left:5px;top:86px;width:17px;height:16px"><svg class="a" style="left:0;top:0" width="17" height="16" viewBox="0 0 17 16"><circle cx="5" cy="4" r="2.6" fill="#c8a070" stroke="#6a4a20" stroke-width="0.8"/><path d="M0.5 12c0-4 2-5.5 4.5-5.5S9.5 8 9.5 12z" fill="#70a040" stroke="#3a6020" stroke-width="0.8"/><circle cx="10" cy="6" r="2.6" fill="#b88860" stroke="#5a3a20" stroke-width="0.8"/><path d="M5.5 15c0-4 2-5.5 4.5-5.5s4.5 1.5 4.5 5.5z" fill="#5a8ac0" stroke="#2a4a80" stroke-width="0.8"/></svg></div>
<div class="t dlg" style="left:23px;top:90px;color:#000">Операторы учета</div>
<div class="t dlg" style="left:432px;top:90px;width:61px;overflow:hidden;letter-spacing:-0.3px;color:#000">root.pyatilistnik.org</div>
<div class="a" style="left:5px;top:103px;width:17px;height:16px"><svg class="a" style="left:0;top:0" width="17" height="16" viewBox="0 0 17 16"><circle cx="5" cy="4" r="2.6" fill="#c8a070" stroke="#6a4a20" stroke-width="0.8"/><path d="M0.5 12c0-4 2-5.5 4.5-5.5S9.5 8 9.5 12z" fill="#70a040" stroke="#3a6020" stroke-width="0.8"/><circle cx="10" cy="6" r="2.6" fill="#b88860" stroke="#5a3a20" stroke-width="0.8"/><path d="M5.5 15c0-4 2-5.5 4.5-5.5s4.5 1.5 4.5 5.5z" fill="#5a8ac0" stroke="#2a4a80" stroke-width="0.8"/></svg></div>
<div class="t dlg" style="left:23px;top:107px;color:#000">Пользователи</div>
<div class="t dlg" style="left:432px;top:107px;width:61px;overflow:hidden;letter-spacing:-0.3px;color:#000">root.pyatilistnik.org</div>
<div class="a" style="left:5px;top:120px;width:17px;height:16px"><svg class="a" style="left:0;top:0" width="17" height="16" viewBox="0 0 17 16"><circle cx="5" cy="4" r="2.6" fill="#c8a070" stroke="#6a4a20" stroke-width="0.8"/><path d="M0.5 12c0-4 2-5.5 4.5-5.5S9.5 8 9.5 12z" fill="#70a040" stroke="#3a6020" stroke-width="0.8"/><circle cx="10" cy="6" r="2.6" fill="#b88860" stroke="#5a3a20" stroke-width="0.8"/><path d="M5.5 15c0-4 2-5.5 4.5-5.5s4.5 1.5 4.5 5.5z" fill="#5a8ac0" stroke="#2a4a80" stroke-width="0.8"/></svg></div>
<div class="t dlg" style="left:23px;top:124px;color:#000">Пользователи DCOM</div>
<div class="t dlg" style="left:432px;top:124px;width:61px;overflow:hidden;letter-spacing:-0.3px;color:#000">root.pyatilistnik.org</div>
<div class="a" style="left:22px;top:137px;width:471px;height:17px;background:#3a8ee8"></div>
<div class="a" style="left:5px;top:137px;width:17px;height:16px"><svg class="a" style="left:0;top:0" width="17" height="16" viewBox="0 0 17 16"><circle cx="5" cy="4" r="2.6" fill="#7a90b8" stroke="#6a4a20" stroke-width="0.8"/><path d="M0.5 12c0-4 2-5.5 4.5-5.5S9.5 8 9.5 12z" fill="#5a88a8" stroke="#3a6020" stroke-width="0.8"/><circle cx="10" cy="6" r="2.6" fill="#6a80b0" stroke="#5a3a20" stroke-width="0.8"/><path d="M5.5 15c0-4 2-5.5 4.5-5.5s4.5 1.5 4.5 5.5z" fill="#5a80c8" stroke="#2a4a80" stroke-width="0.8"/></svg></div>
<div class="t dlg" style="left:23px;top:141px;color:#fff">Пользователи DHCP</div>
<div class="t dlg" style="left:332px;top:141px;color:#fff">Члены, имеющ...</div>
<div class="t dlg" style="left:432px;top:141px;width:61px;overflow:hidden;letter-spacing:-0.3px;color:#fff">root.pyatilistnik.org</div>
<div class="a" style="left:5px;top:154px;width:17px;height:16px"><svg class="a" style="left:0;top:0" width="17" height="16" viewBox="0 0 17 16"><circle cx="5" cy="4" r="2.6" fill="#c8a070" stroke="#6a4a20" stroke-width="0.8"/><path d="M0.5 12c0-4 2-5.5 4.5-5.5S9.5 8 9.5 12z" fill="#70a040" stroke="#3a6020" stroke-width="0.8"/><circle cx="10" cy="6" r="2.6" fill="#b88860" stroke="#5a3a20" stroke-width="0.8"/><path d="M5.5 15c0-4 2-5.5 4.5-5.5s4.5 1.5 4.5 5.5z" fill="#5a8ac0" stroke="#2a4a80" stroke-width="0.8"/></svg></div>
<div class="t dlg" style="left:23px;top:158px;color:#000">Пользователи домена</div>
<div class="t dlg" style="left:332px;top:158px;color:#000">Все пользоват...</div>
<div class="t dlg" style="left:432px;top:158px;width:61px;overflow:hidden;letter-spacing:-0.3px;color:#000">root.pyatilistnik.org</div>
<div class="a" style="left:5px;top:171px;width:17px;height:16px"><svg class="a" style="left:0;top:0" width="17" height="16" viewBox="0 0 17 16"><circle cx="5" cy="4" r="2.6" fill="#c8a070" stroke="#6a4a20" stroke-width="0.8"/><path d="M0.5 12c0-4 2-5.5 4.5-5.5S9.5 8 9.5 12z" fill="#70a040" stroke="#3a6020" stroke-width="0.8"/><circle cx="10" cy="6" r="2.6" fill="#b88860" stroke="#5a3a20" stroke-width="0.8"/><path d="M5.5 15c0-4 2-5.5 4.5-5.5s4.5 1.5 4.5 5.5z" fill="#5a8ac0" stroke="#2a4a80" stroke-width="0.8"/></svg></div>
<div class="t dlg" style="left:23px;top:175px;color:#000">Пользователи журналов производительности</div>
<div class="t dlg" style="left:432px;top:175px;width:61px;overflow:hidden;letter-spacing:-0.3px;color:#000">root.pyatilistnik.org</div>
</div>
<div class="a" style="left:1016px;top:572px;width:16px;height:182px;background:#fff;border-left:1px solid #e8e8e8"></div>
<div class="a" style="left:1016px;top:573px;width:16px;height:16px;border:1px solid #e6e6e6"></div>
<svg class="a" style="left:1020px;top:578px" width="9" height="6" viewBox="0 0 9 6"><path d="M1 5l3.5-3.5L8 5" fill="none" stroke="#555" stroke-width="1.3"/></svg>
<div class="a" style="left:1017px;top:673px;width:15px;height:27px;background:#dadada;border:1px solid #c6c6c6"></div>
<div class="a" style="left:1021px;top:682px;width:7px;height:2px;background:#666"></div><div class="a" style="left:1021px;top:685px;width:7px;height:2px;background:#666"></div><div class="a" style="left:1021px;top:688px;width:7px;height:2px;background:#666"></div>
<div class="a" style="left:1016px;top:737px;width:16px;height:17px;border:1px solid #e6e6e6"></div>
<svg class="a" style="left:1020px;top:743px" width="9" height="6" viewBox="0 0 9 6"><path d="M1 1l3.5 3.5L8 1" fill="none" stroke="#555" stroke-width="1.3"/></svg>
<div class="a" style="left:523px;top:754px;width:493px;height:17px;background:#fff"></div>
<div class="a" style="left:541px;top:754px;width:428px;height:16px;background:#dadada;border:1px solid #c6c6c6"></div>
<svg class="a" style="left:528px;top:758px" width="7" height="10" viewBox="0 0 7 10"><path d="M5.5 1L1.5 5l4 4" fill="none" stroke="#555" stroke-width="1.2"/></svg>
<div class="a" style="left:999px;top:754px;width:17px;height:16px;border-left:1px solid #e6e6e6"></div>
<svg class="a" style="left:1004px;top:758px" width="7" height="10" viewBox="0 0 7 10"><path d="M1.5 1l4 4-4 4" fill="none" stroke="#555" stroke-width="1.2"/></svg>
<div class="a" style="left:752px;top:758px;width:2px;height:8px;background:#555"></div><div class="a" style="left:755px;top:758px;width:2px;height:8px;background:#555"></div><div class="a" style="left:758px;top:758px;width:2px;height:8px;background:#555"></div>
<div class="a" style="left:1016px;top:754px;width:16px;height:16px;background:#f0f0f0"></div>


<div class="a" style="left:295px;top:569px;width:215px;height:210px;background:#fff"></div>
<div class="a" style="left:295px;top:779px;width:88px;height:17px;background:#fff"></div>
<svg class="a" style="left:290px;top:565px" width="225" height="215" viewBox="0 0 225 215">
<defs>
<linearGradient id="bodyg" x1="0" y1="0" x2="0" y2="1"><stop offset="0" stop-color="#8e8e8e"/><stop offset="0.14" stop-color="#727272"/><stop offset="0.32" stop-color="#222"/><stop offset="1" stop-color="#080808"/></linearGradient>
<radialGradient id="faceg" cx="0.5" cy="0.45" r="0.6"><stop offset="0" stop-color="#fff"/><stop offset="0.6" stop-color="#f4f4f4"/><stop offset="1" stop-color="#b8bcc4"/></radialGradient>
<linearGradient id="redg" x1="0" y1="0" x2="1" y2="1"><stop offset="0" stop-color="#f08a3a"/><stop offset="0.6" stop-color="#e0521c"/><stop offset="1" stop-color="#c8401a"/></linearGradient>
<linearGradient id="greeng" x1="0" y1="0" x2="1" y2="1"><stop offset="0" stop-color="#7ac828"/><stop offset="1" stop-color="#2e8a10"/></linearGradient>
<linearGradient id="blueg" x1="0" y1="0" x2="1" y2="1"><stop offset="0" stop-color="#3a80f0"/><stop offset="1" stop-color="#1a3ac0"/></linearGradient>
<linearGradient id="yelg" x1="0" y1="0" x2="0" y2="1"><stop offset="0" stop-color="#fff060"/><stop offset="0.6" stop-color="#f6d010"/><stop offset="1" stop-color="#e8a810"/></linearGradient>
</defs>
<!-- flippers -->
<path d="M5 72 C14 64 22 60 30 56 L28 90 C20 82 12 76 5 72z" fill="#111"/>
<path d="M176 73 C167 65 160 60 152 56 L154 90 C162 82 170 77 176 73z" fill="#111"/>
<!-- body -->
<clipPath id="bclip"><rect x="0" y="0" width="225" height="150"/></clipPath><ellipse cx="91" cy="92" rx="74" ry="84" fill="url(#bodyg)" clip-path="url(#bclip)"/>
<!-- face -->
<path d="M31 150 C25 95 32 45 62 26 C74 20 84 26 89 36 C94 26 106 20 120 26 C150 45 156 95 152 150 Z" fill="url(#faceg)"/>
<!-- eyes -->
<circle cx="64" cy="40" r="4.6" fill="#111"/>
<circle cx="116" cy="40.5" r="4.6" fill="#111"/>
<!-- beak -->
<path d="M73 56 C80 48 98 47 105 55 C98 63 80 64 73 56Z" fill="#f0c000"/><path d="M79 54 C85 50 95 50 100 53 C94 56 85 56 79 54Z" fill="#ffe23a"/>
<!-- cream feet area -->
<path d="M85 133 L141 136 L149 100 L159 103 L150 150 L136 151 L80 150 Z" fill="#f4d030"/>
<!-- red -->
<path d="M101 85 C118 81 135 83 151 86 L141 137 C125 134 105 131 87 134 Z" fill="url(#redg)"/>
<path d="M101 85 C118 81 135 83 151 86 L146 112 C128 108 110 110 95 114 Z" fill="#f6a060" opacity="0.3"/>
<!-- green -->
<path d="M159 102 C176 98 195 102 212 104 L201 148 C185 146 165 144 148 147 Z" fill="url(#greeng)"/>
<!-- left yellow -->
<path d="M23 122 L45 106 L56 111 L77 148 L65 159 L23 146 Z" fill="url(#yelg)"/>
<!-- blue -->
<path d="M83 148 C100 144 118 143 136 145 L127 195 C110 191 88 189 70 192 Z" fill="url(#blueg)"/>
<!-- yellow br -->
<path d="M136 161 C155 157 176 156 196 158 L185 202 C168 200 150 199 132 202 Z" fill="url(#yelg)"/>
<!-- text -->
<text x="36" y="180.5" font-family="Liberation Sans" font-weight="bold" font-size="25" fill="#111" transform="translate(36 0) scale(0.84 1) translate(-36 0)" stroke="#111" stroke-width="1.3">pyatilistnik.org</text>
</svg>

<div class="a" style="left:0;top:819px;width:1150px;height:38px;background:#6bc4e9;border-top:2px solid #3b5f6d"></div>
<div class="a" style="left:0;top:821px;width:1150px;height:1px;background:#8cc5de"></div>
<!-- running item backgrounds -->
<div class="a" style="left:51px;top:821px;width:58px;height:36px;background:#79cbee"></div>
<div class="a" style="left:237px;top:821px;width:58px;height:36px;background:#79cbee"></div>
<div class="a" style="left:361px;top:821px;width:58px;height:36px;background:#a6dcf3"></div>
<div class="a" style="left:50px;top:821px;width:1px;height:36px;background:#1f4a5e"></div>
<div class="a" style="left:109px;top:821px;width:1px;height:36px;background:#1f4a5e"></div>
<div class="a" style="left:236px;top:821px;width:1px;height:36px;background:#1f4a5e"></div>
<div class="a" style="left:295px;top:821px;width:1px;height:36px;background:#1f4a5e"></div>
<div class="a" style="left:360px;top:821px;width:1px;height:36px;background:#1f4a5e"></div>
<div class="a" style="left:419px;top:821px;width:1px;height:36px;background:#1f4a5e"></div>
<!-- start logo -->
<svg class="a" style="left:10px;top:826px" width="28" height="27" viewBox="0 0 28 27"><path d="M0.5 4L12 2.3V12.5H0.5z M13.5 2.1L27.5 0V12.5H13.5z M0.5 14H12V24.5L0.5 23z M13.5 14H27.5V27L13.5 25z" fill="#fff"/></svg>
<!-- server manager -->
<svg class="a" style="left:64px;top:824px" width="32" height="32" viewBox="0 0 32 32"><rect x="0.5" y="0.5" width="14" height="7" fill="#2a70b8" stroke="#fff"/><rect x="0.5" y="7.5" width="14" height="24" fill="#2a80d0" stroke="#fff"/><circle cx="7.5" cy="13" r="3" fill="#4aa0f0"/><rect x="6.5" y="17.5" width="25" height="13" fill="#7a8a96" stroke="#fff"/><rect x="14" y="15" width="8" height="3" fill="#8a98a4" stroke="#fff" stroke-width="0.8"/><path d="M10 23h19M10 23l3-2M10 23l3 2M29 23l-3-2M29 23l-3 2" stroke="#fff" stroke-width="1.4" fill="none"/></svg>
<!-- powershell -->
<svg class="a" style="left:127px;top:828px" width="31" height="25" viewBox="0 0 31 25"><path d="M6 0.5H30.5L25 24.5H0.5z" fill="#2e6fc0" stroke="#1a3f7a"/><path d="M6 2H29L27 10H4z" fill="#5a98dc" opacity="0.6"/><path d="M9 6l8 6-9 6" fill="none" stroke="#fff" stroke-width="2.4"/><path d="M15 19h6" stroke="#fff" stroke-width="2"/></svg>
<!-- explorer -->
<svg class="a" style="left:187px;top:826px" width="33" height="29" viewBox="0 0 33 29"><path d="M1 4h10l2 2h19v22H1z" fill="#f2d27a" stroke="#c09a40"/><rect x="2" y="8" width="29" height="4" fill="#fff6d8"/><rect x="6" y="2" width="3" height="2" fill="#c03030"/><rect x="14" y="2" width="3" height="2" fill="#30a030"/><path d="M6 28v-8h21v8M10 28v-4h13v4" fill="#bde0f8" stroke="#3a88c8" stroke-width="1.4"/></svg>
<!-- gpmc scroll + toolbox -->
<svg class="a" style="left:249px;top:825px" width="34" height="31" viewBox="0 0 34 31"><path d="M7 1h17l2 2v22H7z" fill="#fdf8e4" stroke="#b8b090"/><path d="M11 6h11M11 9h11M11 12h11M11 15h11M11 18h8" stroke="#999" stroke-width="1"/><path d="M3 24h14v3H3z" fill="#efe6c0" stroke="#b8b090"/><rect x="15" y="20" width="16" height="10" fill="#7a8694" stroke="#3a4450"/><path d="M19 20v-3h8v3" fill="none" stroke="#3a4450" stroke-width="1.5"/><path d="M15 24h16" stroke="#b8c4d0"/></svg>
<!-- aduc book -->
<svg class="a" style="left:311px;top:828px" width="34" height="24" viewBox="0 0 34 24"><path d="M1 13L20 3l13 5-18 10z" fill="#f6e184" stroke="#9a8a40"/><path d="M1 13v3l14 7 18-11V8L15 18z" fill="#d4b648" stroke="#8a7a30" stroke-width="0.8"/><path d="M5 13l15-8M8 14l15-8M11 15l15-8" stroke="#bfa850" stroke-width="0.8"/></svg>
<!-- gpedit scroll -->
<svg class="a" style="left:375px;top:825px" width="30" height="31" viewBox="0 0 30 31"><path d="M7 1h17l2 2v24H7z" fill="#fdf6dc" stroke="#c0b490"/><path d="M11 6h11M11 9h11M11 12h11M11 15h11M11 18h11M11 21h11" stroke="#888" stroke-width="1"/><path d="M3 26h20v3H3z" fill="#efe2b8" stroke="#b8a880"/><path d="M24 1l3 2-3 1z" fill="#d8cca0"/></svg>
<!-- tray -->
<svg class="a" style="left:940px;top:837px" width="8" height="5" viewBox="0 0 8 5"><path d="M0 5L4 0.5 8 5z" fill="#10283a"/></svg>
<svg class="a" style="left:959px;top:831px" width="17" height="17" viewBox="0 0 17 17"><path d="M2 1v15" stroke="#fff" stroke-width="1.6"/><path d="M3 1.5h8v8H3z" fill="#fff" stroke="#6a7a88" stroke-width="0.8"/><circle cx="12" cy="12" r="4" fill="#e05050" stroke="#fff"/><path d="M10.3 10.3l3.4 3.4M13.7 10.3l-3.4 3.4" stroke="#fff" stroke-width="1.2"/></svg>
<svg class="a" style="left:984px;top:831px" width="17" height="17" viewBox="0 0 17 17"><rect x="1" y="1" width="4" height="4" fill="#fff" stroke="#455" stroke-width="0.8"/><path d="M3 5v10" stroke="#fff" stroke-width="1.6"/><rect x="6.5" y="1.5" width="10" height="9" fill="#dfe8ee" stroke="#455"/><path d="M8 3h7v6H8z" fill="#6a8aa0"/><path d="M8 16l4-6.5 4 6.5z" fill="#f2c418" stroke="#a07a00" stroke-width="0.5"/><path d="M12 11.5v2.5" stroke="#222"/></svg>
<svg class="a" style="left:1007px;top:831px" width="18" height="17" viewBox="0 0 18 17"><path d="M1 6h3l5-4v13l-5-4H1z" fill="#f4f6f8" stroke="#6a7a88" stroke-width="0.8"/><circle cx="13" cy="12" r="4" fill="#e05050" stroke="#fff"/><path d="M11.3 10.3l3.4 3.4M14.7 10.3l-3.4 3.4" stroke="#fff" stroke-width="1.2"/></svg>
<div class="t" style="left:1038px;top:834px;font-size:12px;letter-spacing:-0.7px;color:#0e2230">ENG</div>
<div class="t" style="left:1092px;top:826px;font-size:12px;letter-spacing:-0.5px;color:#0e2230">15:39</div>
<div class="t" style="left:1078px;top:843px;font-size:12px;letter-spacing:-0.5px;color:#0e2230">13.11.2019</div>

<!-- taskbar -->

<div class="a" style="left:1150px;top:0;width:3px;height:857px;background:#000"></div>
</body></html>
